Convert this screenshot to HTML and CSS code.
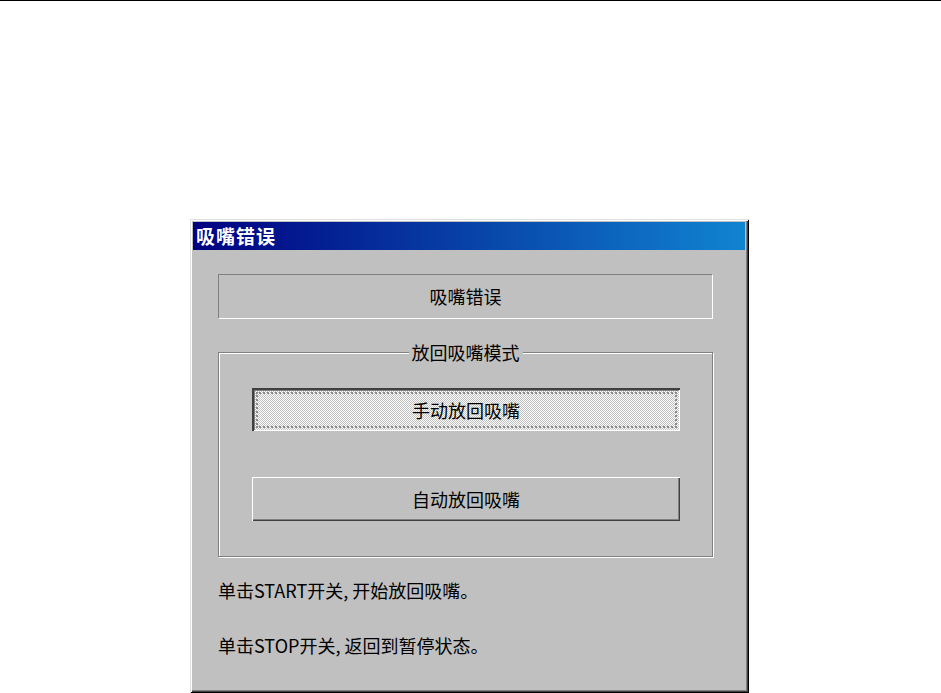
FILE: index.html
```html
<!DOCTYPE html>
<html>
<head>
    <meta charset="utf-8">
    <title>吸嘴错误</title>
    <link rel="stylesheet" href="styles.css">
</head>
<body>
    <div class="window">
        <div class="title-bar">吸嘴错误</div>
        <div class="window-body">
            <div class="status-panel">吸嘴错误</div>

            <div class="group-box">
                <span class="group-label">放回吸嘴模式</span>
                <button class="btn pressed">手动放回吸嘴</button>
                <button class="btn">自动放回吸嘴</button>
            </div>

            <div class="hints">
                <p>单击START开关, 开始放回吸嘴。</p>
                <p>单击STOP开关, 返回到暂停状态。</p>
            </div>
        </div>
    </div>
</body>
</html>
```

FILE: styles.css
```css
html, body {
  margin: 0;
  padding: 0;
}

body {
  background-color: #fff;
  border-top: 1px solid #000;
  height: 692px;
  overflow: hidden;
  font-family: "Noto Sans CJK SC", "Liberation Sans", sans-serif;
  font-size: 18px;
  color: #000;
}

.window {
  margin: 218px 0 0 190px;
  width: 559px;
  height: 474px;
  box-sizing: border-box;
  padding: 3px 4px 3px 3px;
  background-color: #c0c0c0;
  box-shadow: inset 1px 1px #dfdfdf, inset -1px -1px #000,
              inset 2px 2px #fff, inset -2px -2px #404040,
              inset -3px -3px #808080;
}

.title-bar {
  height: 28px;
  line-height: 28px;
  padding-left: 3px;
  background: linear-gradient(to right, #000080, #1084d0);
  color: #fff;
  font-weight: bold;
  font-size: 19px;
  letter-spacing: 1px;
}

.window-body {
  padding: 24px 0 0 25px;
}

.status-panel {
  width: 495px;
  height: 45px;
  box-sizing: border-box;
  line-height: 43px;
  text-align: center;
  border: 1px solid;
  border-color: #808080 #fff #fff #808080;
}

.group-box {
  position: relative;
  margin-top: 33px;
  width: 495px;
  height: 205px;
  box-sizing: border-box;
  padding: 35px 32px 0 33px;
  display: flex;
  flex-direction: column;
  gap: 46px;
  border: 1px solid #808080;
  box-shadow: inset 1px 1px #fff, 1px 1px #fff;
}

.group-label {
  position: absolute;
  top: -13px;
  left: 50%;
  transform: translateX(-50%);
  padding: 0 3px;
  line-height: 24px;
  background-color: #c0c0c0;
  white-space: nowrap;
}

.btn {
  width: 428px;
  height: 44px;
  padding: 0;
  border: 0;
  font-family: inherit;
  font-size: 18px;
  color: #000;
  background-color: #c0c0c0;
  box-shadow: inset 1px 1px #fff, inset -1px -1px #404040,
              inset -2px -2px #808080;
}

.btn.pressed {
  height: 43px;
  position: relative;
  background-color: #e0e0e0;
  background-image: repeating-conic-gradient(#fff 0 25%, #c0c0c0 0 50%);
  background-size: 2px 2px;
  box-shadow: inset 2px 2px #404040, inset -1px -1px #fff,
              inset 3px 3px #808080;
}

.btn.pressed::after {
  content: "";
  position: absolute;
  top: 4px;
  left: 4px;
  right: 3px;
  bottom: 3px;
  border: 2px dotted #8a8a8a;
}

.hints {
  padding-top: 21px;
}

.hints p {
  margin: 0 0 31px 0;
  line-height: 24px;
}
```
